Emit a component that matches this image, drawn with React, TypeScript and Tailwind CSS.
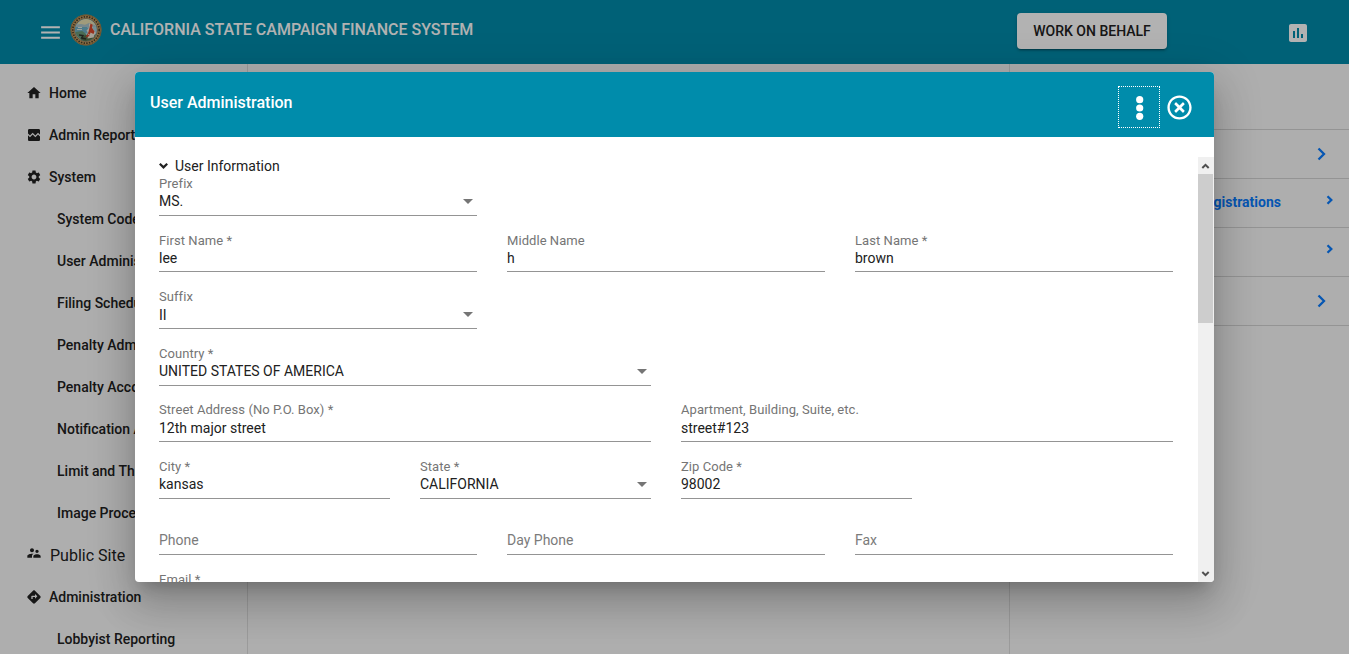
import type { ReactNode } from 'react';
import { MdHome, MdBrokenImage, MdSettings, MdSupervisorAccount, MdDirections, MdMenu, MdAssessment } from 'react-icons/md';
import { FaRegTimesCircle } from 'react-icons/fa';

function Seal() {
  return (
    <svg viewBox="0 0 32 32" className="size-8 shrink-0">
      <circle cx="16" cy="16" r="15.500" fill="#c79f62" />
      <circle cx="16" cy="16" r="15.100" fill="none" stroke="#8a6a3a" strokeWidth="0.8" />
      <circle cx="16" cy="16" r="13.200" fill="none" stroke="#4a3d2a" strokeWidth="1.700" strokeDasharray="1.500 1.200" />
      <circle cx="16" cy="16" r="11.400" fill="#a5cfdc" stroke="#6b5836" strokeWidth="0.6" />
      <path d="M6 12Q10 5 16 5t10 7l-4 1-5-2-5 2Z" fill="#e6dfb0" />
      <path d="M6 10.500l5-.5 4 .8 4-1.800 7 2.500v1.500H5.500Z" fill="#a9c3cb" />
      <path d="M5 13h12l2 3-2 3H5.200Z" fill="#6fb0c6" />
      <path d="M5.200 18l7-1 4 3-1 7Q7 25 5.200 18Z" fill="#6b9a78" />
      <path d="M12 22l4-1 5 1 5-2q-3 7-10 7-3 0-5-1.500Z" fill="#54704a" />
      <path d="M19 9.500l3.500 1v4l3 4-2 5-6 1 1-5-2-3 2.500-2.500Z" fill="#efe4d4" />
      <path d="M20.500 9.500l2.200 1.200-.7 3 2.500 3.800-1 2.500-3-1.500-1 3.500-4 1.500 3-5.500Z" fill="#d9482c" />
      <path d="M9 21l4 .5-1.500 2.500 4.500 1" fill="none" stroke="#2d322c" strokeWidth="1.300" />
      <path d="M7 15.500h5M8 13.500h4M18 20l3 2" stroke="#f4efdd" strokeWidth="0.9" />
    </svg>
  );
}

function Chevron({ small }: { small?: boolean }) {
  return small ? (
    <svg viewBox="0 0 8 10" className="mr-[15px] h-2.5 w-2"><path d="M1.500 1.300L5.300 5 1.500 8.700" fill="none" stroke="#0a7cff" strokeWidth="2.300" /></svg>
  ) : (
    <svg viewBox="0 0 10 14" className="mr-[22px] h-3.5 w-2.5"><path d="M1.500 1.500L7 7l-5.500 5.500" fill="none" stroke="#0a7cff" strokeWidth="2.300" /></svg>
  );
}

function NavItem({ icon, children }: { icon?: ReactNode; children: ReactNode }) {
  return (
    <div className={icon ? 'flex h-[42px] items-center pl-[26px]' : 'flex h-[42px] items-center pl-[57px]'}>
      {icon && <span className="mr-[7px] w-4">{icon}</span>}
      <span className="whitespace-nowrap">{children}</span>
    </div>
  );
}

function Field({ label, value, select, width }: { label: string; value?: string; select?: boolean; width: string }) {
  return (
    <div className={`${width} flex h-[39.500px] shrink-0 flex-col border-b border-[#949494]`}>
      {value ? (
        <>
          <span className="-mt-[0.3px] h-[15.400px] text-[13px] leading-[15px] tracking-[0.06px] text-[#757575]">{label}</span>
          <span className="flex h-5 items-center justify-between text-sm leading-5 text-[#212121]">
            {value}
            {select && <svg viewBox="0 0 10 5" className="mr-1 h-[5px] w-2.5"><path d="M0 0h10L5 5Z" fill="#757575" /></svg>}
          </span>
        </>
      ) : (
        <span className="pt-[14.600px] text-sm leading-5 text-[#7b7b7b]">{label}</span>
      )}
    </div>
  );
}

const third = 'w-[318px]';
const half = 'w-[492px]';
const quarter = 'w-[231px]';

const rows = [
  [{ label: 'Prefix', value: 'MS.', select: true, width: third }],
  [
    { label: 'First Name *', value: 'lee', width: third },
    { label: 'Middle Name', value: 'h', width: third },
    { label: 'Last Name *', value: 'brown', width: third },
  ],
  [{ label: 'Suffix', value: 'II', select: true, width: third }],
  [{ label: 'Country *', value: 'UNITED STATES OF AMERICA', select: true, width: half }],
  [
    { label: 'Street Address (No P.O. Box) *', value: '12th major street', width: half },
    { label: 'Apartment, Building, Suite, etc.', value: 'street#123', width: half },
  ],
  [
    { label: 'City *', value: 'kansas', width: quarter },
    { label: 'State *', value: 'CALIFORNIA', select: true, width: quarter },
    { label: 'Zip Code *', value: '98002', width: quarter },
  ],
  [
    { label: 'Phone', width: third },
    { label: 'Day Phone', width: third },
    { label: 'Fax', width: third },
  ],
  [{ label: 'Email *', value: ' ', width: half }],
];

function Modal() {
  return (
    <div className="flex h-[510px] w-[1079px] flex-col overflow-hidden rounded-[4px] bg-white shadow-[0_11px_15px_-7px_rgba(0,0,0,0.2),0_24px_38px_3px_rgba(0,0,0,0.14),0_9px_46px_8px_rgba(0,0,0,0.12)]">
      <div className="flex h-[65px] shrink-0 justify-between bg-[#008cab] pl-[15px] text-white">
        <h2 className="pt-[19px] text-base font-medium leading-6">User Administration</h2>
        <div className="flex pt-3.5">
          <button className="flex h-[42px] w-[42px] items-center justify-center border border-dotted border-white pl-px pt-0.5">
            <svg viewBox="0 0 8 24" className="h-6 w-2" fill="#fff"><circle cx="3.700" cy="3.700" r="3.600" /><circle cx="3.700" cy="12" r="3.600" /><circle cx="3.700" cy="20.300" r="3.600" /></svg>
          </button>
          <FaRegTimesCircle className="ml-[7px] mr-[22px] mt-[9px] size-[25px]" />
        </div>
      </div>
      <div className="flex min-h-0 flex-1 pt-5">
        <div className="flex-1 overflow-hidden pl-6">
          <div className="flex h-5 items-center pb-0.5 text-sm text-[#212121]">
            <svg viewBox="0 0 10 8" className="mr-1.5 h-2 w-2.5"><path d="M0.800 1.700l3.700 3.700 3.700-3.700" fill="none" stroke="#212121" strokeWidth="2.200" /></svg>
            <span>User Information</span>
          </div>
          <div className="-mt-[0.7px] flex flex-col gap-[17.080px]">
            {rows.map((row, i) => (
              <div key={i} className="flex gap-[30px]">{row.map((f) => <Field key={f.label} {...f} />)}</div>
            ))}
          </div>
        </div>
        <div className="flex w-4 shrink-0 flex-col items-start bg-[#f0f0f0]">
          <svg viewBox="0 0 15 17" className="h-[17px] w-[15px] shrink-0"><path d="M4.300 11l3.200-3.200 3.200 3.200" fill="none" stroke="#505050" strokeWidth="2" /></svg>
          <div className="h-[149px] w-[15px] bg-[#cdcdcd]" />
          <div className="flex-1" />
          <svg viewBox="0 0 15 17" className="h-[17px] w-[15px] shrink-0"><path d="M4.300 7l3.200 3.200 3.200-3.200" fill="none" stroke="#505050" strokeWidth="2" /></svg>
        </div>
      </div>
    </div>
  );
}

export default function App() {
  return (
    <div className="relative h-[654px] w-[1349px] overflow-hidden bg-[#fafafa] font-[Roboto,sans-serif]">
      <header className="flex h-16 bg-[#008cab] text-white">
        <MdMenu className="ml-[38px] mt-[20px] size-[25px]" />
        <div className="ml-[7px] pt-[13.500px]"><Seal /></div>
        <h1 className="ml-2 w-[907px] pt-[18px] text-base font-medium leading-6">CALIFORNIA STATE CAMPAIGN FINANCE SYSTEM</h1>
        <button className="mt-[13px] h-9 w-[150px] shrink-0 rounded-[4px] bg-white text-sm font-medium text-[#212121] shadow-[0_3px_1px_-2px_rgba(0,0,0,0.2),0_2px_2px_rgba(0,0,0,0.14),0_1px_5px_rgba(0,0,0,0.12)]">WORK ON BEHALF</button>
        <MdAssessment className="ml-[119px] mt-[21px] size-6 shrink-0" />
      </header>
      <main className="flex h-[590px]">
        <nav className="w-[248px] border-r border-[#dfdfdf] pt-2 text-sm font-medium text-[#212121]">
          <NavItem icon={<MdHome className="size-4" />}>Home</NavItem>
          <NavItem icon={<MdBrokenImage className="size-4" />}>Admin Reports</NavItem>
          <NavItem icon={<MdSettings className="size-4" />}>System</NavItem>
          <NavItem>System Codes</NavItem>
          <NavItem>User Administration</NavItem>
          <NavItem>Filing Schedule</NavItem>
          <NavItem>Penalty Administration</NavItem>
          <NavItem>Penalty Accounts</NavItem>
          <NavItem>Notification Admin</NavItem>
          <NavItem>Limit and Threshold</NavItem>
          <NavItem>Image Processing</NavItem>
          <NavItem icon={<MdSupervisorAccount className="-mt-1 size-4" />}><span className="flex pl-px pt-0.5 text-base font-normal">Public Site</span></NavItem>
          <NavItem icon={<MdDirections className="size-4" />}>Administration</NavItem>
          <NavItem>Lobbyist Reporting</NavItem>
        </nav>
        <section className="w-[761px]" />
        <aside className="flex-1 border-l border-[#dfdfdf] text-sm font-bold text-[#0a7cff]">
          <div className="h-[66px] border-b border-[#d5d5d5]" />
          <div className="flex h-[49px] items-center justify-end border-b border-[#d5d5d5]"><Chevron /></div>
          <div className="flex h-[49px] items-center justify-end border-b border-[#d5d5d5] pb-[5px]">
            <span className="mr-[45px] pt-0.5">Pending Registrations</span><span className="-mt-0.5"><Chevron small /></span>
          </div>
          <div className="flex h-[49px] items-center justify-end border-b border-[#d5d5d5] pb-1.5"><Chevron small /></div>
          <div className="flex h-[49px] items-center justify-end border-b border-[#d5d5d5]"><Chevron /></div>
        </aside>
      </main>
      <div className="absolute inset-0 bg-black/30 pl-[135px] pt-[72px]"><Modal /></div>
    </div>
  );
}
